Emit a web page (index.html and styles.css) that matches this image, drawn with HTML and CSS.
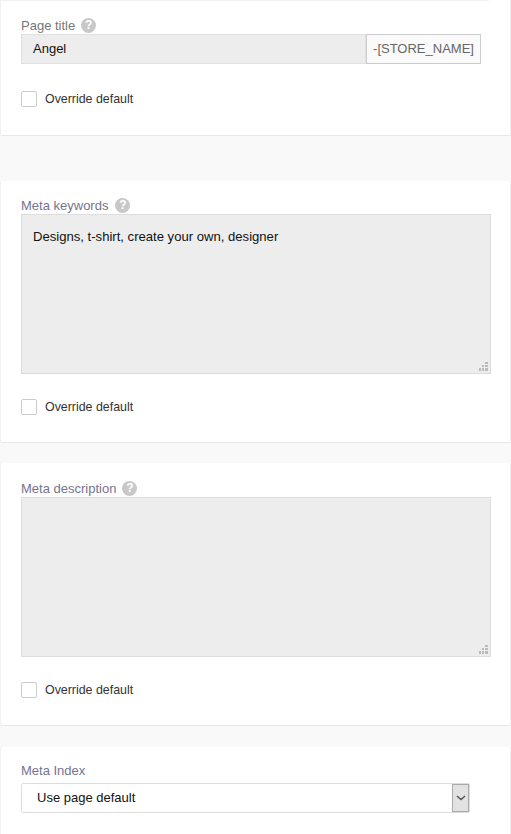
FILE: index.html
```html
<!DOCTYPE html>
<html lang="en">
<head>
    <meta charset="UTF-8">
    <title>Page meta</title>
    <link rel="stylesheet" href="styles.css">
</head>
<body>

    <section class="card card-title">
        <div class="card-topline"></div>
        <div class="field-label">Page title <span class="help-icon">?</span></div>
        <div class="title-row">
            <div class="title-input">Angel</div>
            <div class="title-suffix">-[STORE_NAME]</div>
        </div>
        <label class="override"><span class="checkbox"></span>Override default</label>
    </section>

    <section class="card card-keywords">
        <div class="field-label">Meta keywords <span class="help-icon">?</span></div>
        <div class="textarea">Designs, t-shirt, create your own, designer
            <svg class="grip" width="9" height="9" viewBox="0 0 9 9"><path d="M6 0h3v2H6zM3 3h2v2H3zM6 3h3v2H6zM0 6h2v3H0zM3 6h2v3H3zM6 6h3v3H6z"/></svg>
        </div>
        <label class="override"><span class="checkbox"></span>Override default</label>
    </section>

    <section class="card card-description">
        <div class="field-label">Meta description <span class="help-icon">?</span></div>
        <div class="textarea">
            <svg class="grip" width="9" height="9" viewBox="0 0 9 9"><path d="M6 0h3v2H6zM3 3h2v2H3zM6 3h3v2H6zM0 6h2v3H0zM3 6h2v3H3zM6 6h3v3H6z"/></svg>
        </div>
        <label class="override"><span class="checkbox"></span>Override default</label>
    </section>

    <section class="card card-index">
        <div class="field-label">Meta Index</div>
        <div class="select">
            <span class="select-value">Use page default</span>
            <span class="select-arrow">
                <svg width="10" height="6" viewBox="0 0 10 6"><path d="M1 1l4 3.5L9 1" fill="none" stroke="#555" stroke-width="1.5"/></svg>
            </span>
        </div>
    </section>

</body>
</html>
```

FILE: styles.css
```css
* {
    box-sizing: border-box;
}

body {
    margin: 0;
    height: 834px;
    overflow: hidden;
    background-color: #f9f9f9;
    font-family: "Liberation Sans", Arial, sans-serif;
    font-size: 13px;
    color: #222;
}

.card {
    margin: 0 0 0 1px;
    width: 509px;
    padding: 0 20px;
    background: #fff;
    border-bottom: 1px solid #e8e8e8;
    box-shadow: 1px 0 0 #f1f1f1, -1px 0 0 #f1f1f1;
}

.card-title {
    height: 136px;
    padding-top: 17px;
    margin-bottom: 45px;
    position: relative;
}

.card-topline {
    position: absolute;
    top: 0;
    left: -1px;
    width: 489px;
    height: 1px;
    background: #f1f1f1;
}

.card-keywords {
    height: 262px;
    padding-top: 16px;
    margin-bottom: 20px;
}

.card-description {
    height: 263px;
    padding-top: 17px;
    margin-bottom: 21px;
}

.card-index {
    height: 88px;
    padding-top: 15px;
}

.field-label {
    display: flex;
    align-items: center;
    gap: 6px;
    height: 17px;
    color: #74748f;
    line-height: 17px;
}

.card-title .field-label {
    color: #777;
}

.card-keywords .field-label {
    gap: 7px;
}

.help-icon {
    width: 15px;
    height: 15px;
    border-radius: 50%;
    background: #c8c8c8;
    color: #fff;
    font-size: 12px;
    font-weight: bold;
    line-height: 15px;
    text-align: center;
}

.title-row {
    display: flex;
    height: 30px;
}

.title-input {
    width: 345px;
    padding-left: 11px;
    background: #ededed;
    border: 1px solid #e0e0e0;
    color: #111;
    line-height: 28px;
}

.title-suffix {
    width: 115px;
    background: #fafafa;
    border: 1px solid #ccc;
    color: #666;
    line-height: 28px;
    text-align: center;
}

.textarea {
    position: relative;
    width: 470px;
    height: 160px;
    padding: 14px 11px;
    background: #ededed;
    border: 1px solid #ddd;
    color: #111;
    font-size: 13.1px;
    line-height: 15px;
}

.grip {
    position: absolute;
    right: 2px;
    bottom: 2px;
    fill: #bbb;
}

.override {
    display: flex;
    align-items: center;
    gap: 8px;
    margin-top: 24px;
    height: 18px;
    color: #333;
    font-size: 12.4px;
}

.card-title .override {
    margin-top: 26px;
}

.checkbox {
    width: 16px;
    height: 16px;
    background: #fff;
    border: 1px solid #ccc;
    border-radius: 2px;
}

.select {
    display: flex;
    justify-content: space-between;
    width: 449px;
    height: 30px;
    margin-top: 4px;
    padding-left: 15px;
    background: #fff;
    border: 1px solid #ddd;
    border-radius: 2px;
    color: #111;
    line-height: 28px;
}

.select-arrow {
    display: flex;
    align-items: center;
    justify-content: center;
    width: 17px;
    height: 28px;
    background: #e2e2e2;
    border: 1px solid #aaa;
}
```
